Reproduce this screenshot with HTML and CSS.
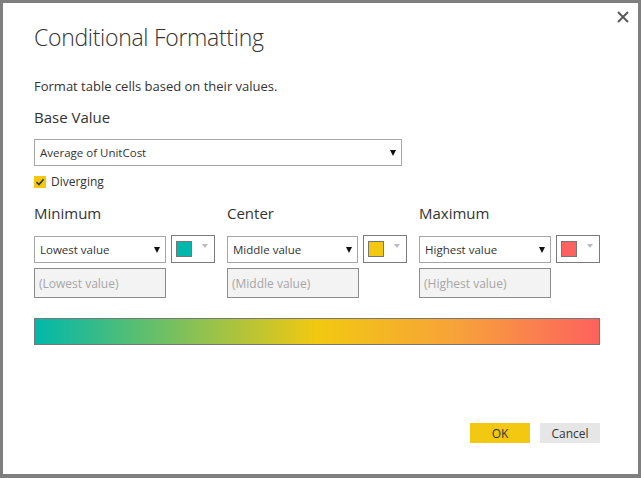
FILE: index.html
```html
<!DOCTYPE html>
<html>
<head>
<meta charset="utf-8">
<link rel="stylesheet" href="styles.css">
</head>
<body>
<div class="win">
  <button class="close" aria-label="Close">
    <svg width="12" height="12" viewBox="0 0 12 12"><path d="M1 1L11 11M11 1L1 11" stroke="#5a5a5a" stroke-width="2"/></svg>
  </button>
  <h1 class="title">Conditional Formatting</h1>
  <p class="sub">Format table cells based on their values.</p>
  <h2 class="label">Base Value</h2>
  <div class="select wide"><span>Average of UnitCost</span><i class="arrow"></i></div>
  <label class="check"><span class="box"><svg width="12" height="12" viewBox="0 0 12 12"><path d="M2.5 6.2L5 8.6L9.6 3.2" fill="none" stroke="#333" stroke-width="1.6"/></svg></span>Diverging</label>
  <div class="cols">
    <div class="col">
      <h2 class="label">Minimum</h2>
      <div class="row">
        <div class="select"><span>Lowest value</span><i class="arrow"></i></div>
        <div class="picker"><span class="swatch teal"></span><i class="parrow"></i></div>
      </div>
      <div class="input">(Lowest value)</div>
    </div>
    <div class="col">
      <h2 class="label">Center</h2>
      <div class="row">
        <div class="select"><span>Middle value</span><i class="arrow"></i></div>
        <div class="picker"><span class="swatch yellow"></span><i class="parrow"></i></div>
      </div>
      <div class="input">(Middle value)</div>
    </div>
    <div class="col">
      <h2 class="label">Maximum</h2>
      <div class="row">
        <div class="select"><span>Highest value</span><i class="arrow"></i></div>
        <div class="picker"><span class="swatch red"></span><i class="parrow"></i></div>
      </div>
      <div class="input">(Highest value)</div>
    </div>
  </div>
  <div class="gradient"></div>
  <div class="actions">
    <button class="btn ok">OK</button>
    <button class="btn cancel">Cancel</button>
  </div>
</div>
</body>
</html>
```
FILE: styles.css
```css
html, body { margin: 0; padding: 0; background: #fff; }
body { font-family: "Open Sans", "Noto Sans", sans-serif; color: #333; }
.win {
  position: relative;
  box-sizing: border-box;
  width: 641px;
  height: 478px;
  border-style: solid;
  border-color: #7f7f7f;
  border-width: 3px 3px 4px 3px;
  background: #fff;
  padding: 0 38px 0 31px;
  display: flex;
  flex-direction: column;
}
.close {
  position: absolute;
  top: 8px;
  right: 9px;
  border: 0;
  background: none;
  padding: 0;
  width: 12px;
  height: 12px;
  display: flex;
}
.title {
  margin: 17px 0 0 0;
  font-weight: 300;
  font-size: 23px;
  line-height: 34px;
  color: #333;
  letter-spacing: -0.3px;
}
.sub {
  margin: 23px 0 0 0;
  font-size: 13px;
  line-height: 18px;
}
.label {
  margin: 0;
  font-weight: 400;
  font-size: 15px;
  line-height: 20px;
  color: #333;
}
.sub + .label { margin-top: 12px; }
.select {
  box-sizing: border-box;
  height: 27px;
  border: 1px solid #a6a6a6;
  display: flex;
  align-items: center;
  padding: 0 5px 0 5px;
  font-size: 11.5px;
  color: #333;
  background: #fff;
}
.select span { flex: 1; }
.select.wide { width: 368px; margin-top: 12px; }
.arrow {
  width: 0; height: 0;
  border-left: 3.5px solid transparent;
  border-right: 3.5px solid transparent;
  border-top: 6px solid #111;
}
.check {
  display: flex;
  align-items: center;
  gap: 5px;
  margin-top: 9px;
  font-size: 12px;
  line-height: 14px;
}
.box {
  width: 12px; height: 12px;
  background: #f2c811;
  display: flex;
}
.cols {
  display: grid;
  grid-template-columns: 181px 180px 181px;
  column-gap: 12px;
  margin-top: 14px;
}
.col .label { margin-bottom: 13px; }
.row { display: flex; gap: 5px; }
.row .select { width: 132px; }
.picker {
  box-sizing: border-box;
  width: 44px;
  height: 28px;
  margin-top: -1px;
  border: 1px solid #7a7a7a;
  display: flex;
  align-items: center;
  padding-left: 4px;
  gap: 10px;
}
.swatch {
  box-sizing: border-box;
  width: 16px; height: 16px;
  border: 1px solid #777;
}
.teal { background: #01b8aa; }
.yellow { background: #f2c811; }
.red { background: #fd625e; }
.parrow {
  width: 0; height: 0;
  border-left: 3.5px solid transparent;
  border-right: 3.5px solid transparent;
  border-top: 4px solid #bdbdbd;
  margin-top: -6px;
}
.input {
  box-sizing: border-box;
  width: 132px;
  height: 30px;
  margin-top: 5px;
  border: 1px solid #8c8c8c;
  background: #f3f3f3;
  color: #a6a6a6;
  font-size: 12px;
  display: flex;
  align-items: center;
  padding-left: 4px;
}
.gradient {
  box-sizing: border-box;
  width: 566px;
  height: 27px;
  margin-top: 20px;
  border: 1px solid #777;
  background: linear-gradient(to right, #01b8aa 0%, #f2c811 50%, #f7a23a 75%, #fd625e 100%);
}
.actions {
  margin-top: auto;
  margin-bottom: 31px;
  display: flex;
  justify-content: flex-end;
  gap: 10px;
}
.btn {
  width: 60px;
  height: 20px;
  border: 0;
  padding: 0;
  font-family: inherit;
  font-size: 12px;
  color: #333;
}
.ok { background: #f2c811; }
.cancel { background: #e6e6e6; }
```
